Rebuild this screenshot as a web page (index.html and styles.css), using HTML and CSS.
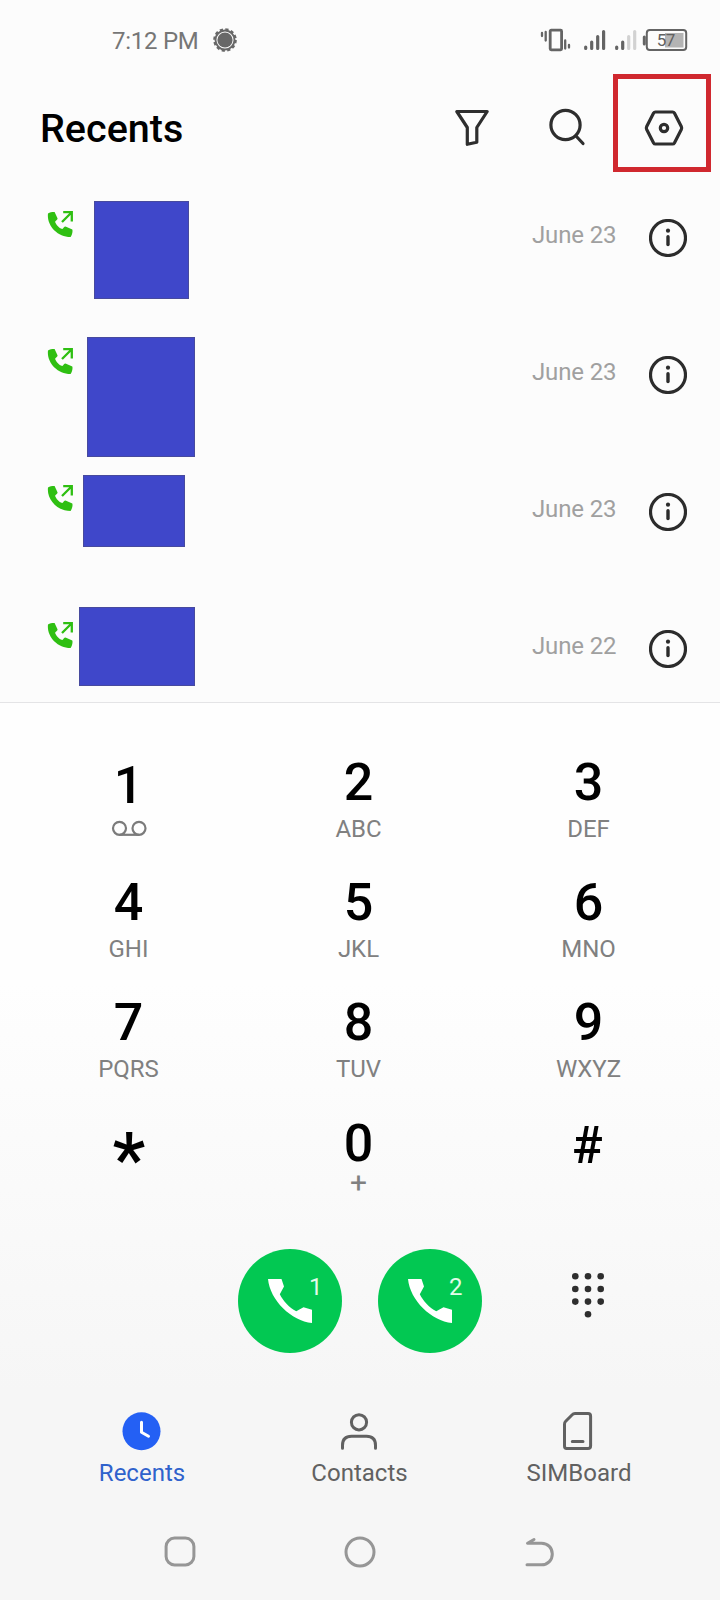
FILE: index.html
```html
<!DOCTYPE html>
<html lang="en">
<head>
<meta charset="utf-8">
<title>Recents</title>
<link rel="stylesheet" href="styles.css">
</head>
<body>
<svg class="defs" aria-hidden="true">
  <symbol id="outgoing" viewBox="0 0 26 27">
    <path fill="#2fbf12" d="M1 2.500C3 1.300 5.500 1 7.600 1.100L10.600 7.500C10.500 9 8.600 9.800 8.100 10.800C8.700 13.300 12 17.300 15.200 18.100C16.400 17.600 17 15.600 18.500 15.600L25.300 18.500C26 20.500 25 24 23.600 26C10 26-0.500 14 1 2.500Z"/>
    <path fill="none" stroke="#2fbf12" stroke-width="2.300" d="M15 11 24.500 1.500M16.200 1.200H24.800V10.500"/>
  </symbol>
  <symbol id="info" viewBox="0 0 38 38">
    <circle cx="19" cy="19" r="17.500" fill="none" stroke="#2c2c2c" stroke-width="3.200"/>
    <circle cx="19" cy="11.700" r="2.100" fill="#2c2c2c"/>
    <path stroke="#2c2c2c" stroke-width="3.400" stroke-linecap="round" d="M19 17.800V25.600"/>
  </symbol>
  <symbol id="handset" viewBox="0 0 44 44">
    <path fill="#fff" d="M0 0H13.500L16 7.500 11.800 15.200C15 21.500 21 28.500 28.300 32.200L35.500 28.300 44 30.700V44C23.500 42 2 21.500 0 0Z"/>
  </symbol>
</svg>
<div class="phone">
  <header class="status">
    <span class="time">7:12 PM</span>
    <svg class="sun" viewBox="0 0 26 26"><circle cx="13" cy="13" r="10.600" fill="none" stroke="#686868" stroke-width="2.400" stroke-dasharray="3.200 2.350"/><circle cx="13" cy="13" r="9.500" fill="none" stroke="#686868" stroke-width="1.900"/><circle cx="13" cy="13" r="7.600" fill="#686868"/></svg>
    <svg class="indicators" viewBox="0 0 148 24">
      <g fill="none" stroke="#646464" stroke-width="2.800" stroke-linecap="round">
        <path stroke-width="2.300" d="M2 5V8M5.700 4V12.500M25.200 12.500V20.500M29 17V19.500"/>
        <rect x="10.200" y="2.200" width="11.400" height="19.600" rx="1"/>
        <path stroke-width="3.200" d="M45.700 19V20.500M51.700 14V20.500M57.700 8.500V20.500M63.600 3.500V20.500M76.700 19V20.500M82.700 14V20.500"/>
        <path stroke="#d2d2d2" stroke-width="3.200" d="M88.700 8.500V20.500M94.700 3.500V20.500"/>
        <path stroke-width="3" d="M104.300 9V16"/>
      </g>
      <rect x="125" y="5" width="18.500" height="14.500" fill="#b4b4b4"/>
      <rect x="106.800" y="2" width="39.400" height="20" rx="3" fill="none" stroke="#646464" stroke-width="2"/>
      <text class="level" x="116.800" y="18">57</text>
    </svg>
  </header>

  <div class="toolbar">
    <h1 class="title">Recents</h1>
    <svg class="filter" viewBox="0 0 36 38"><path d="M2.800 2.500H33.200L22.800 18.500V33.300L13.300 35.300V18.500Z"/></svg>
    <svg class="search" viewBox="0 0 38 40"><circle cx="16.500" cy="17" r="14.600"/><path d="M27 28 34 35.500"/></svg>
    <div class="highlight">
      <svg class="settings" viewBox="0 0 40 38"><path d="M11.500 3H28.500Q29.800 3 30.400 4.100L37.300 17.500Q38 19 37.300 20.500L30.400 33.900Q29.800 35 28.500 35H11.500Q10.200 35 9.600 33.900L2.700 20.500Q2 19 2.700 17.500L9.600 4.100Q10.200 3 11.500 3Z"/><circle cx="20" cy="19" r="3.700"/></svg>
    </div>
  </div>

  <main class="calls">
    <div class="call"><svg class="outgoing"><use href="#outgoing"/></svg><div class="redacted first"></div><span class="date">June 23</span><svg class="info"><use href="#info"/></svg></div>
    <div class="call"><svg class="outgoing"><use href="#outgoing"/></svg><div class="redacted second"></div><span class="date">June 23</span><svg class="info"><use href="#info"/></svg></div>
    <div class="call"><svg class="outgoing"><use href="#outgoing"/></svg><div class="redacted third"></div><span class="date">June 23</span><svg class="info"><use href="#info"/></svg></div>
    <div class="call"><svg class="outgoing"><use href="#outgoing"/></svg><div class="redacted fourth"></div><span class="date">June 22</span><svg class="info"><use href="#info"/></svg></div>
  </main>

  <section class="dialer">
    <div class="keys">
      <div class="key one"><b>1</b><svg class="voicemail" viewBox="0 0 36 16"><g fill="none" stroke="#7b7b7b" stroke-width="2.200"><circle cx="8.500" cy="7.300" r="6.500"/><circle cx="28" cy="7.300" r="6.500"/><path d="M8.500 13.800H28"/></g></svg></div>
      <div class="key"><b>2</b><span>ABC</span></div>
      <div class="key"><b>3</b><span>DEF</span></div>
      <div class="key"><b>4</b><span>GHI</span></div>
      <div class="key"><b>5</b><span>JKL</span></div>
      <div class="key"><b>6</b><span>MNO</span></div>
      <div class="key"><b>7</b><span>PQRS</span></div>
      <div class="key"><b>8</b><span>TUV</span></div>
      <div class="key"><b>9</b><span>WXYZ</span></div>
      <div class="key star"><b>*</b></div>
      <div class="key zero"><b>0</b><span>+</span></div>
      <div class="key hash"><b>#</b></div>
    </div>
    <div class="actions">
      <div class="dial"><svg class="handset"><use href="#handset"/></svg><span class="sim">1</span></div>
      <div class="dial"><svg class="handset"><use href="#handset"/></svg><span class="sim">2</span></div>
      <svg class="pad" viewBox="0 0 34 46"><g fill="#2e2e2e"><circle cx="4.300" cy="4.300" r="3.300"/><circle cx="17" cy="4.300" r="3.300"/><circle cx="29.700" cy="4.300" r="3.300"/><circle cx="4.300" cy="17" r="3.300"/><circle cx="17" cy="17" r="3.300"/><circle cx="29.700" cy="17" r="3.300"/><circle cx="4.300" cy="29.600" r="3.300"/><circle cx="17" cy="29.600" r="3.300"/><circle cx="29.700" cy="29.600" r="3.300"/><circle cx="17" cy="42.300" r="3.300"/></g></svg>
    </div>
  </section>

  <nav class="tabs">
    <div class="tab active"><svg viewBox="0 0 40 40"><circle class="face" cx="19.500" cy="20.300" r="19"/><path class="hands" d="M19.500 11.300V21.300L26.500 25.300"/></svg><span>Recents</span></div>
    <div class="tab"><svg viewBox="0 0 40 40"><circle cx="19" cy="11.300" r="7.600"/><path d="M2.500 37.300V34.300Q2.500 25.300 11.500 25.300H26.500Q35.500 25.300 35.500 34.300V37.300"/></svg><span>Contacts</span></div>
    <div class="tab"><svg viewBox="0 0 40 40"><path d="M16 2.600H29Q31.600 2.600 31.600 5.200V35Q31.600 37.600 29 37.600H7.600Q5.500 37.600 5.500 35V13.300Q5.500 11.500 6.700 10.300L13.200 3.700Q14.200 2.600 16 2.600ZM13.300 30.600H24"/></svg><span>SIMBoard</span></div>
  </nav>

  <footer class="system">
    <svg viewBox="0 0 32 32"><rect x="2.100" y="2.100" width="27.800" height="26.800" rx="8.500"/></svg>
    <svg viewBox="0 0 32 32"><circle cx="16" cy="16" r="14"/></svg>
    <svg viewBox="0 0 32 32"><path d="M10 3.500 3.500 7.200H17.500C24 7.200 28.300 12 28.300 18S24 28.800 17.500 28.800H3"/></svg>
  </footer>
</div>
</body>
</html>
```
FILE: styles.css
```css
* { box-sizing: border-box; }
body { margin: 0; font-family: Roboto, sans-serif; }
svg { display: block; flex: none; overflow: visible; }
.defs { position: absolute; width: 0; height: 0; }
.phone {
  width: 720px; height: 1600px; overflow: hidden;
  display: flex; flex-direction: column;
  background: #fcfcfc;
}
.status { height: 74px; flex: none; display: flex; align-items: flex-start; padding: 28px 32px 0 112px; }
.time { width: 100px; font-size: 24px; line-height: 26px; letter-spacing: -0.25px; color: #767676; white-space: nowrap; }
.sun { width: 26px; height: 26px; margin-top: -1px; }
.indicators { width: 148px; height: 24px; margin-left: auto; }
.level { font-size: 17px; letter-spacing: -0.5px; fill: #606060; }

.toolbar { height: 118px; flex: none; display: flex; align-items: flex-start; padding: 0 9px 0 40px; }
.title { margin: 34px auto 0 0; font-size: 39.5px; line-height: 42px; font-weight: 500; color: #000; }
.toolbar svg { fill: none; stroke: #2e2e2e; stroke-width: 3.2; stroke-linecap: round; stroke-linejoin: round; }
.filter { width: 36px; height: 38px; margin-top: 35px; }
.search { width: 38px; height: 40px; margin: 34px 26px 0 59px; }
.highlight { width: 98px; height: 98px; border: 5px solid #d0282f; padding: 30px 0 0 26px; }
.settings { width: 40px; height: 38px; }

.calls { height: 510px; flex: none; overflow: hidden; }
.call { height: 137px; display: flex; align-items: flex-start; padding: 0 33px 0 47px; }
.outgoing { width: 26px; height: 27px; margin-top: 18.5px; }
.redacted { background: #3f47ca; border: 1px solid #474a9e; }
.first { width: 95px; height: 98px; margin: 9px 0 0 21px; }
.second { width: 108px; height: 120px; margin: 8px 0 0 14px; }
.third { width: 102px; height: 72px; margin: 9px 0 0 10px; }
.fourth { width: 116px; height: 79px; margin: 4px 0 0 6px; }
.date { margin: 31px 32.7px 0 auto; font-size: 24px; line-height: 24px; letter-spacing: -0.15px; color: #a0a0a0; }
.info { width: 38px; height: 38px; margin-top: 27px; }

.dialer {
  height: 688px; flex: none; border-top: 1px solid #e4e4e6; padding: 50px 16.5px 0 13.5px;
  background: linear-gradient(#fefefe 0, #fefefe 280px, #f6f6f6 688px);
}
.keys { display: grid; grid-template-columns: repeat(3, 1fr); grid-auto-rows: 120px; }
.key { display: flex; flex-direction: column; align-items: center; padding-top: 4px; }
.key b { font-size: 52px; line-height: 52px; font-weight: 500; color: #000; }
.key span { margin-top: 8px; font-size: 24px; line-height: 24px; color: #808080; }
.key.one { padding-top: 7px; }
.voicemail { width: 36px; height: 16px; margin-top: 9px; }
.key.star { padding: 10px 0 0 1px; }
.key.star b { font-size: 74px; line-height: 74px; font-weight: 500; }
.key.zero { padding-top: 5px; }
.key.zero span { font-size: 30px; margin-top: 1px; }
.key.hash { padding-top: 7px; }
.key.hash b { font-size: 51px; margin-left: -2px; }
.actions { display: flex; align-items: flex-start; gap: 36px; padding: 16px 0 0 224.5px; }
.dial { width: 104px; height: 104px; border-radius: 50%; background: #02c852; display: flex; padding: 30px 0 0 30px; }
.handset { width: 44px; height: 44px; }
.sim { margin: -4px 0 0 -3px; font-size: 24px; line-height: 24px; color: #e2fbe9; }
.pad { width: 34px; height: 46px; margin: 23px 0 0 53px; }

.tabs { height: 120px; flex: none; display: flex; justify-content: space-between; padding: 21px 81px 0 82px; background: #f6f6f6; }
.tab { width: 120px; display: flex; flex-direction: column; align-items: center; color: #616161; }
.tab:nth-child(2) { margin-left: -2px; }
.tab svg { width: 40px; height: 40px; fill: none; stroke: #616161; stroke-width: 3; stroke-linecap: round; stroke-linejoin: round; }
.tab .face { fill: #2460f4; stroke: none; }
.tab .hands { stroke: #fff; }
.tab span { margin-top: 10px; font-size: 24px; line-height: 24px; }
.tab.active { color: #2f62cc; }
.system { flex: 1; display: flex; justify-content: space-between; padding: 26px 164px 0; background: #f6f6f6; }
.system svg { width: 32px; height: 32px; fill: none; stroke: #969696; stroke-width: 3; stroke-linecap: round; stroke-linejoin: round; }
```
